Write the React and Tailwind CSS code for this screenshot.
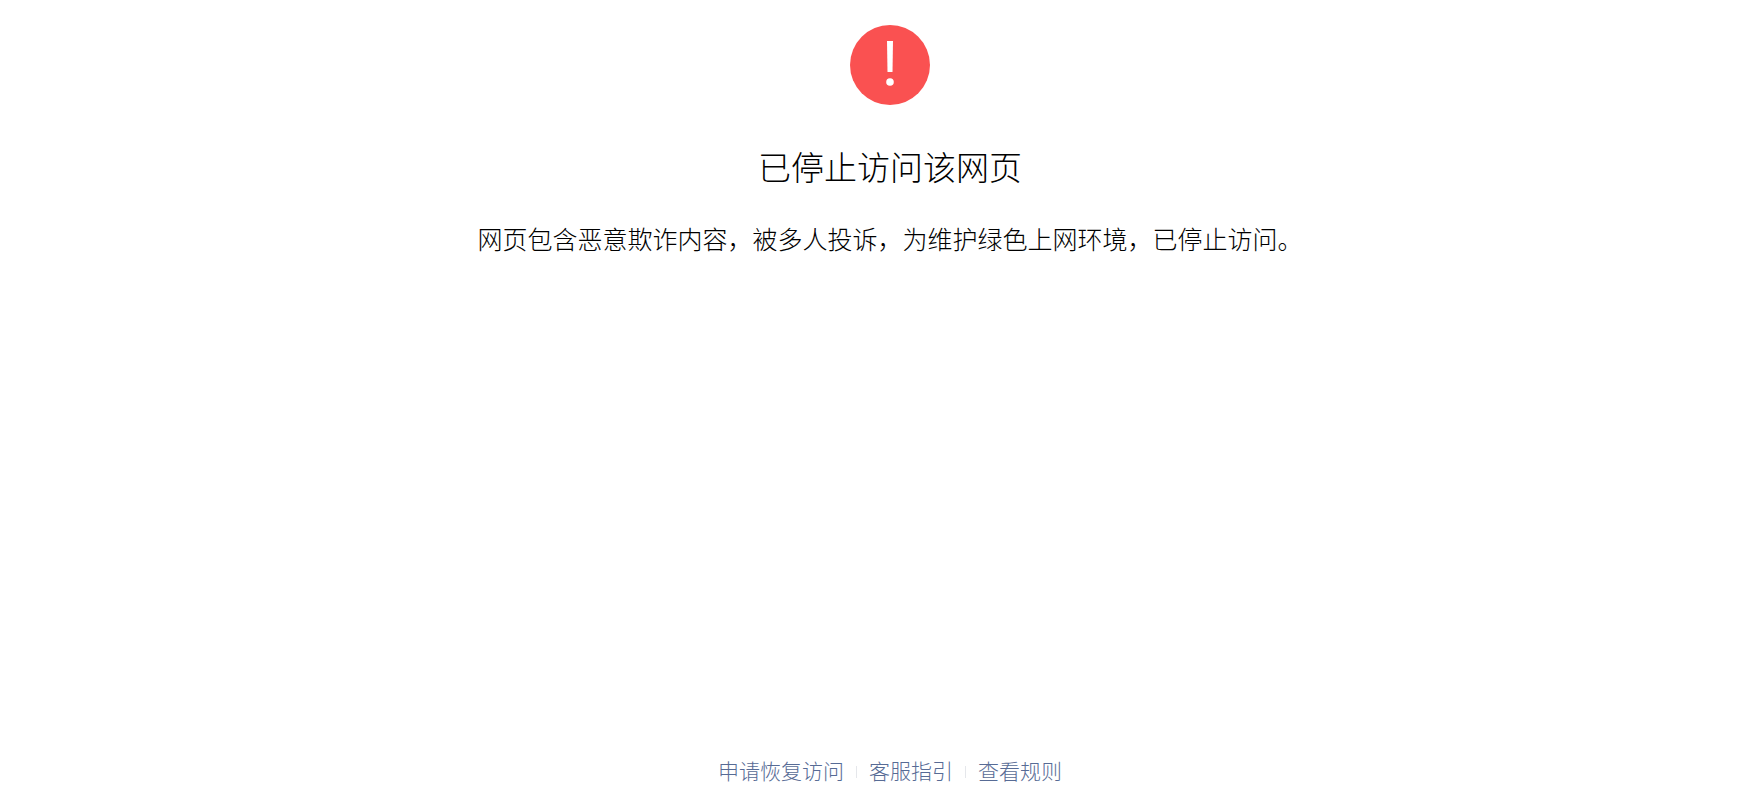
const links = [
  { label: "申请恢复访问", href: "#appeal" },
  { label: "客服指引", href: "#service" },
  { label: "查看规则", href: "#rules" },
];

function WarnIcon() {
  return (
    <svg className="w-20 h-20" viewBox="0 0 80 80" aria-hidden="true">
      <circle cx="40" cy="40" r="40" fill="#fa5151" />
      <path d="M37 16h6l-.5 31h-5z" fill="#fff" />
      <circle cx="40" cy="57" r="3.8" fill="#fff" />
    </svg>
  );
}

export default function App() {
  return (
    <div className="min-h-screen flex flex-col items-center bg-white pt-[25px] pl-[37px] pb-2 font-['Liberation_Sans','Noto_Sans_CJK_SC',sans-serif] font-light">
      {/* Message */}
      <main className="flex-1 flex flex-col items-center text-center text-black" lang="zh-CN">
        <WarnIcon />
        <h1 className="mt-10 text-[33px] leading-[48px]">已停止访问该网页</h1>
        <p className="mt-[26px] text-[25px] leading-[42px]">
          网页包含恶意欺诈内容，被多人投诉，为维护绿色上网环境，已停止访问。
        </p>
      </main>

      {/* Footer links */}
      <footer className="flex items-center py-1" lang="zh-CN">
        {links.map((link, i) => (
          <div key={link.href} className="flex items-center">
            {i > 0 && <span className="w-px h-3 mx-3 bg-gray-200"></span>}
            <a href={link.href} className="text-[21px] leading-[30px] text-[#576b95]">
              {link.label}
            </a>
          </div>
        ))}
      </footer>
    </div>
  );
}
